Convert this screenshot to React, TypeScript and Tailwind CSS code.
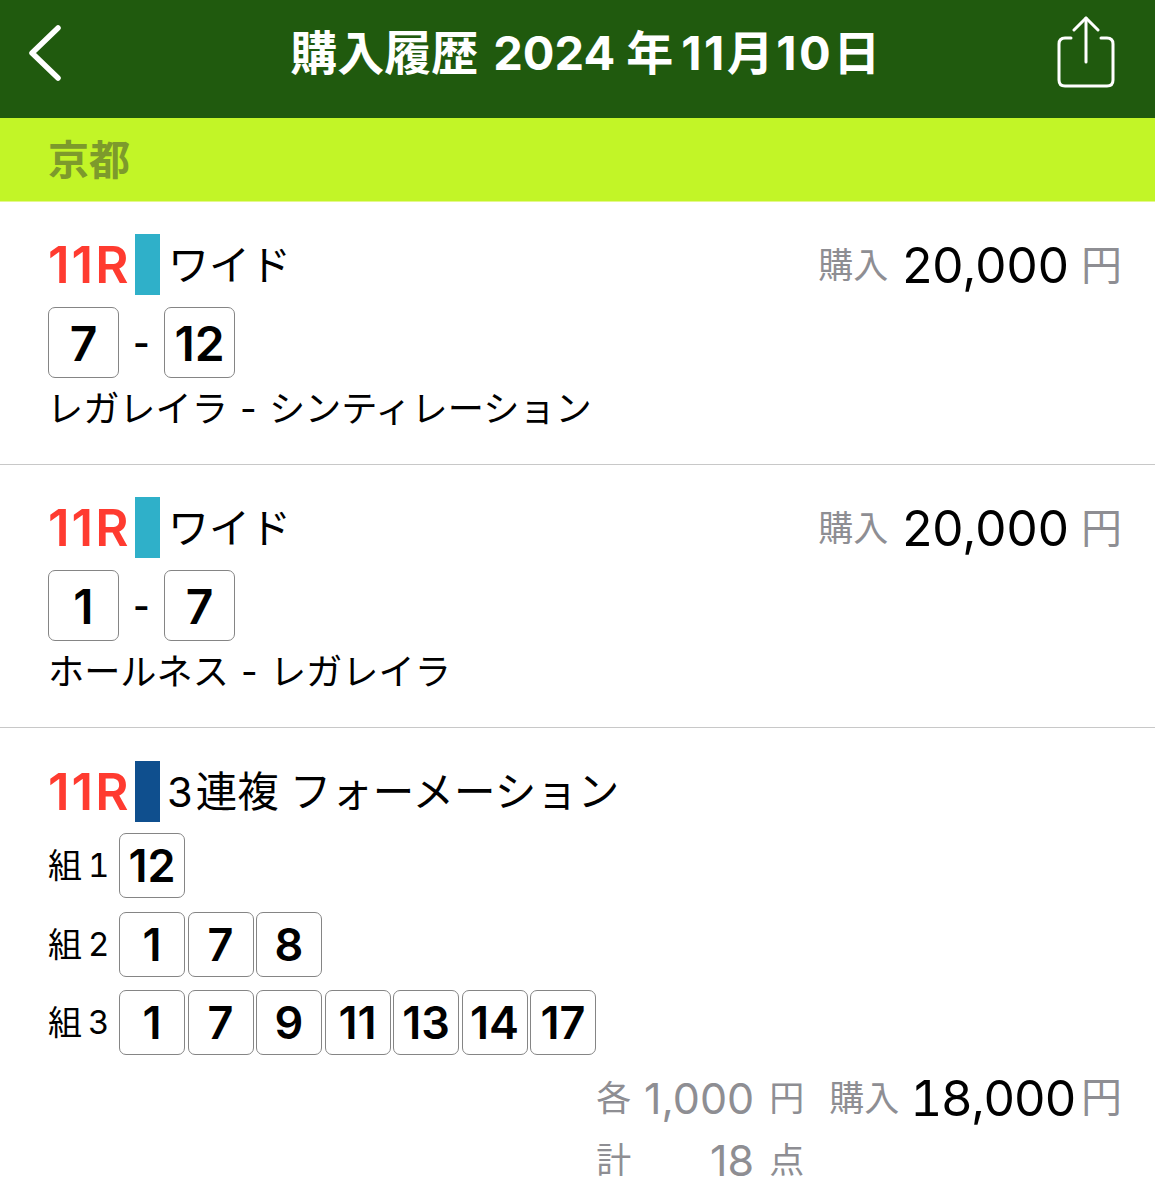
import React from 'react';

const FONT = 'font-["Inter","Noto_Sans_CJK_JP",sans-serif]';

const NumBox: React.FC<{ n: number; big?: boolean }> = ({ n, big }) => (
  <div
    className={`flex items-center justify-center rounded-[7px] border-[1.5px] border-[#858585] font-semibold text-black ${
      big ? 'h-[71px] w-[71px] pt-[2px] text-[48px]' : 'h-[65px] w-[66px] text-[45px]'
    }`}
  >
    {n}
  </div>
);

const RaceHead: React.FC<{ color: string; label: React.ReactNode }> = ({ color, label }) => (
  <div className="flex h-[61px] items-center">
    <span className="w-[87px] pt-[1px] text-[51px] font-semibold tracking-[2px] whitespace-nowrap text-[#ff3b30]">11R</span>
    <div className={`h-[61px] w-[25px] ${color}`} />
    <span className="ml-[8px] pt-[2px] text-[41px] leading-none text-black">{label}</span>
  </div>
);

const Price: React.FC = () => (
  <div className="flex h-[61px] items-center pt-[2px]">
    <span className="mr-[14px] text-[35px] text-[#8e8e93]">購入</span>
    <span className="text-[49.5px] text-black">20,000</span>
    <span className="ml-[12px] text-[41px] text-[#8e8e93]">円</span>
  </div>
);

const WideRow: React.FC<{ a: number; b: number; names: string; indent?: string }> = ({ a, b, names, indent }) => (
  <div className="h-[263px] border-b border-[#c8c8c8] pt-8 pr-[33px] pl-12">
    <div className="flex justify-between">
      <RaceHead color="bg-[#2fb0c9]" label="ワイド" />
      <Price />
    </div>
    <div className="mt-3 flex items-center">
      <NumBox n={a} big />
      <span className="w-[45px] text-center text-[36px] font-semibold text-black">-</span>
      <NumBox n={b} big />
    </div>
    <div className={`mt-[7px] text-[36.2px] leading-[48px] [word-spacing:2px] text-black ${indent ?? ''}`}>{names}</div>
  </div>
);

const GroupRow: React.FC<{ n: string; nums: number[]; className: string }> = ({ n, nums, className }) => (
  <div className={`flex items-center ${className}`}>
    <span className="flex w-[71px] items-center text-[34px] leading-none text-black">
      組
      <span className="ml-[6px] text-[33px] tabular-nums">{n}</span>
    </span>
    <div className="flex gap-[2.5px]">
      {nums.map((v) => (
        <NumBox key={v} n={v} />
      ))}
    </div>
  </div>
);

const Summary: React.FC<{ label: string; value: string; unit: string }> = ({ label, value, unit }) => (
  <div className="flex h-[62px] items-center text-[#8e8e93]">
    <span className="w-[35px] text-[35px]">{label}</span>
    <span className="flex-1 text-right text-[43px]">{value}</span>
    <span className="ml-[15px] w-[34px] text-[35px]">{unit}</span>
  </div>
);

export default function App() {
  return (
    <div className={`h-[1200px] w-[1155px] overflow-hidden bg-white ${FONT}`}>
      <header className="flex h-[118px] items-center justify-between bg-[#205a0e] pr-[40px] pb-[12px] pl-[28px]">
        <svg width="34" height="56" viewBox="0 0 34 56" fill="none" stroke="#fff" strokeWidth="5.5" strokeLinecap="round" strokeLinejoin="round">
          <path d="M30 3 L4 28 L30 53" />
        </svg>
        <h1 className="ml-[54px] flex text-[47px] font-bold whitespace-nowrap text-white">
          <span>購入履歴</span>
          <span className="ml-[15px]">2024</span>
          <span className="ml-[11px]">年</span>
          <span className="ml-[8px] tracking-[2.5px]">11月10日</span>
        </h1>
        <svg className="mb-[3px]" width="58" height="72" viewBox="0 0 58 72" fill="none" stroke="#fff" strokeWidth="3" strokeLinecap="round" strokeLinejoin="round">
          <path d="M14 22 H8 Q2 22 2 28 V64 Q2 70 8 70 H50 Q56 70 56 64 V28 Q56 22 50 22 H44" />
          <path d="M29 2 V46" />
          <path d="M17 14 L29 2 L41 14" />
        </svg>
      </header>

      <div className="flex h-[84px] items-center border-b border-[#e4f78f] bg-[#c2f527] pt-[2px] pl-12">
        <span className="text-[41px] font-semibold text-[#7d9a2c]">京都</span>
      </div>

      <WideRow a={7} b={12} names="レガレイラ - シンティレーション" indent="-ml-[1px]" />
      <WideRow a={1} b={7} names="ホールネス - レガレイラ" />

      <div className="pt-[33px] pr-[33px] pl-12">
        <RaceHead
          color="bg-[#0f4f8e]"
          label={
            <span className="text-[41.5px]">
              <span className="mr-[3px] -ml-[1px]">3</span>連複<span className="ml-[11px]">フォーメーション</span>
            </span>
          }
        />
        <GroupRow className="mt-[11px]" n="1" nums={[12]} />
        <GroupRow className="mt-[14px]" n="2" nums={[1, 7, 8]} />
        <GroupRow className="mt-[13px]" n="3" nums={[1, 7, 9, 11, 13, 14, 17]} />
        <div className="mt-[12px] flex justify-end">
          <div className="w-[207px]">
            <Summary label="各" value="1,000" unit="円" />
            <Summary label="計" value="18" unit="点" />
          </div>
          <div className="ml-[26px] flex h-[62px] items-center">
            <span className="text-[35px] text-[#8e8e93]">購入</span>
            <span className="ml-[11px] text-[49.5px] tracking-[-1.5px] text-black tabular-nums">18,000</span>
            <span className="ml-[6px] text-[41px] text-[#8e8e93]">円</span>
          </div>
        </div>
      </div>
    </div>
  );
}
